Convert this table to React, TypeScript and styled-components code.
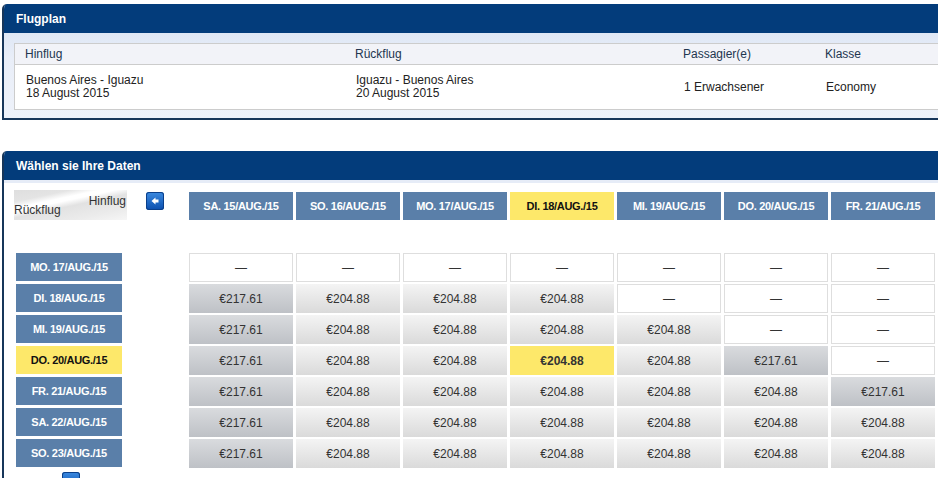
import { Fragment } from "react";
import styled, { createGlobalStyle, css } from "styled-components";

const GlobalStyle = createGlobalStyle`
  body {
    margin: 0;
    overflow: hidden;
    background: #ffffff;
    font-family: "Liberation Sans", Arial, sans-serif;
  }
`;

type Kind = "none" | "low" | "high" | "selected";

const dates = [
  "SA. 15/AUG./15",
  "SO. 16/AUG./15",
  "MO. 17/AUG./15",
  "DI. 18/AUG./15",
  "MI. 19/AUG./15",
  "DO. 20/AUG./15",
  "FR. 21/AUG./15",
];

const L: [Kind, string] = ["low", "€204.88"];
const H: [Kind, string] = ["high", "€217.61"];
const N: [Kind, string] = ["none", "—"];
const S: [Kind, string] = ["selected", "€204.88"];

const rows: { label: string; active?: boolean; cells: [Kind, string][] }[] = [
  { label: "MO. 17/AUG./15", cells: [N, N, N, N, N, N, N] },
  { label: "DI. 18/AUG./15", cells: [H, L, L, L, N, N, N] },
  { label: "MI. 19/AUG./15", cells: [H, L, L, L, L, N, N] },
  { label: "DO. 20/AUG./15", active: true, cells: [H, L, L, S, L, H, N] },
  { label: "FR. 21/AUG./15", cells: [H, L, L, L, L, L, H] },
  { label: "SA. 22/AUG./15", cells: [H, L, L, L, L, L, L] },
  { label: "SO. 23/AUG./15", cells: [H, L, L, L, L, L, L] },
];

function ArrowIcon() {
  return (
    <svg width="10" height="10" viewBox="0 0 10 10">
      <path d="M1.5 5 L5.5 1.5 L5.5 3.6 L8.5 3.6 L8.5 6.4 L5.5 6.4 L5.5 8.5 Z" fill="#ffffff" />
    </svg>
  );
}

export default function App() {
  return (
    <Page>
      <GlobalStyle />
      <Panel>
        <PanelHeader>Flugplan</PanelHeader>
        <PanelBody>
          <PlanTable>
            <PlanHead>Hinflug</PlanHead>
            <PlanHead>Rückflug</PlanHead>
            <PlanHead>Passagier(e)</PlanHead>
            <PlanHead>Klasse</PlanHead>
            <PlanCell>
              Buenos Aires - Iguazu
              <br />
              18 August 2015
            </PlanCell>
            <PlanCell>
              Iguazu - Buenos Aires
              <br />
              20 August 2015
            </PlanCell>
            <PlanCell>1 Erwachsener</PlanCell>
            <PlanCell>Economy</PlanCell>
          </PlanTable>
        </PanelBody>
      </Panel>

      <Panel $gap>
        <PanelHeader>Wählen sie Ihre Daten</PanelHeader>
        <MatrixBody>
          <Matrix>
            <Corner>
              <CornerTop>Hinflug</CornerTop>
              <CornerBottom>Rückflug</CornerBottom>
            </Corner>
            <NavButton>
              <ArrowIcon />
            </NavButton>
            {dates.map((d, i) => (
              <DateHead key={d} $active={i === 3}>
                {d}
              </DateHead>
            ))}
            <Spacer />
            {rows.map((r) => (
              <Fragment key={r.label}>
                <RowLabel $active={r.active}>{r.label}</RowLabel>
                <span />
                {r.cells.map(([kind, text], i) => (
                  <PriceCell key={i} $kind={kind}>
                    {text}
                  </PriceCell>
                ))}
              </Fragment>
            ))}
            <DownButton />
          </Matrix>
        </MatrixBody>
      </Panel>
    </Page>
  );
}

const Page = styled.div`
  padding: 4px 0 0 2px;
  width: 962px;
`;

const Panel = styled.section<{ $gap?: boolean }>`
  display: flex;
  flex-direction: column;
  border: 2px solid #17365a;
  border-top: none;
  border-radius: 5px 5px 0 0;
  overflow: hidden;
  margin-top: ${(p) => (p.$gap ? "31px" : "0")};
`;

const PanelHeader = styled.h2`
  margin: 0 -2px;
  height: 29px;
  padding-left: 14px;
  display: flex;
  align-items: center;
  background: #033c7b;
  color: #ffffff;
  font-size: 12px;
  font-weight: bold;
`;

const PanelBody = styled.div`
  background: linear-gradient(#dfe7f5, #e9eef8 30%, #eef2fa);
  padding: 10px 0 8px 10px;
`;

const PlanTable = styled.div`
  display: grid;
  grid-template-columns: 330px 328px 142px 1fr;
  grid-template-rows: 21px 44px;
  background: #ffffff;
  border: 1px solid #cccccc;
  border-right: none;
`;

const PlanHead = styled.div`
  display: flex;
  align-items: center;
  padding-left: 10px;
  background: #f2f3f8;
  border-bottom: 1px solid #cccccc;
  color: #22364f;
  font-size: 12px;
`;

const PlanCell = styled.div`
  display: flex;
  align-items: center;
  padding-left: 11px;
  color: #222222;
  font-size: 12px;
  line-height: 13px;
`;

const MatrixBody = styled.div`
  background: #ffffff;
  border-top: 3px solid #e6ecf7;
  padding: 7px 0 0 10px;
`;

const Matrix = styled.div`
  display: grid;
  grid-template-columns: 113px 56px repeat(7, 104px);
  grid-template-rows: 30px 29px repeat(7, 29px) 20px;
  column-gap: 3px;
  row-gap: 2px;
`;

const Corner = styled.div`
  position: relative;
  background: linear-gradient(
    168deg,
    #dedede 0%,
    #e4e4e4 22%,
    #ffffff 34%,
    #ffffff 40%,
    #e2e2e2 52%,
    #ebebeb 78%,
    #f6f6f6 100%
  );
  font-size: 12px;
  line-height: 13px;
  color: #333333;
`;

const CornerTop = styled.span`
  position: absolute;
  right: 1px;
  top: 5px;
`;

const CornerBottom = styled.span`
  position: absolute;
  left: 0;
  bottom: 3px;
`;

const buttonLook = css`
  width: 18px;
  height: 18px;
  border-radius: 3px;
  background: linear-gradient(#3b8ae0, #0b4fae);
  box-shadow: 0 0 0 1px #0a3f8a inset;
`;

const NavButton = styled.div`
  ${buttonLook};
  margin: 2px 0 0 16px;
  display: flex;
  align-items: center;
  justify-content: center;
`;

const DownButton = styled.div`
  ${buttonLook};
  grid-column: 1;
  margin: 2px 0 0 48px;
`;

const DateHead = styled.div<{ $active?: boolean }>`
  align-self: end;
  height: 28px;
  display: flex;
  align-items: center;
  justify-content: center;
  background: ${(p) => (p.$active ? "#fde86a" : "#5a7fa9")};
  color: ${(p) => (p.$active ? "#111111" : "#ffffff")};
  font-size: 11px;
  font-weight: bold;
  letter-spacing: -0.3px;
`;

const Spacer = styled.div`
  grid-column: 1 / -1;
`;

const RowLabel = styled.div<{ $active?: boolean }>`
  margin-left: 2px;
  width: 106px;
  height: 28px;
  display: flex;
  align-items: center;
  justify-content: center;
  background: ${(p) => (p.$active ? "#fde86a" : "#5a7fa9")};
  color: ${(p) => (p.$active ? "#111111" : "#ffffff")};
  font-size: 11px;
  font-weight: bold;
  letter-spacing: -0.3px;
`;

const cellBg: Record<Kind, string> = {
  none: "#ffffff",
  low: "linear-gradient(#f4f4f4, #dadada)",
  high: "linear-gradient(#d9dbde, #bec1c6)",
  selected: "#fde86a",
};

const PriceCell = styled.div<{ $kind: Kind }>`
  display: flex;
  align-items: center;
  justify-content: center;
  background: ${(p) => cellBg[p.$kind]};
  border: ${(p) => (p.$kind === "none" ? "1px solid #dedede" : "none")};
  color: #333333;
  font-size: 12px;
  font-weight: ${(p) => (p.$kind === "selected" ? "bold" : "normal")};
`;
